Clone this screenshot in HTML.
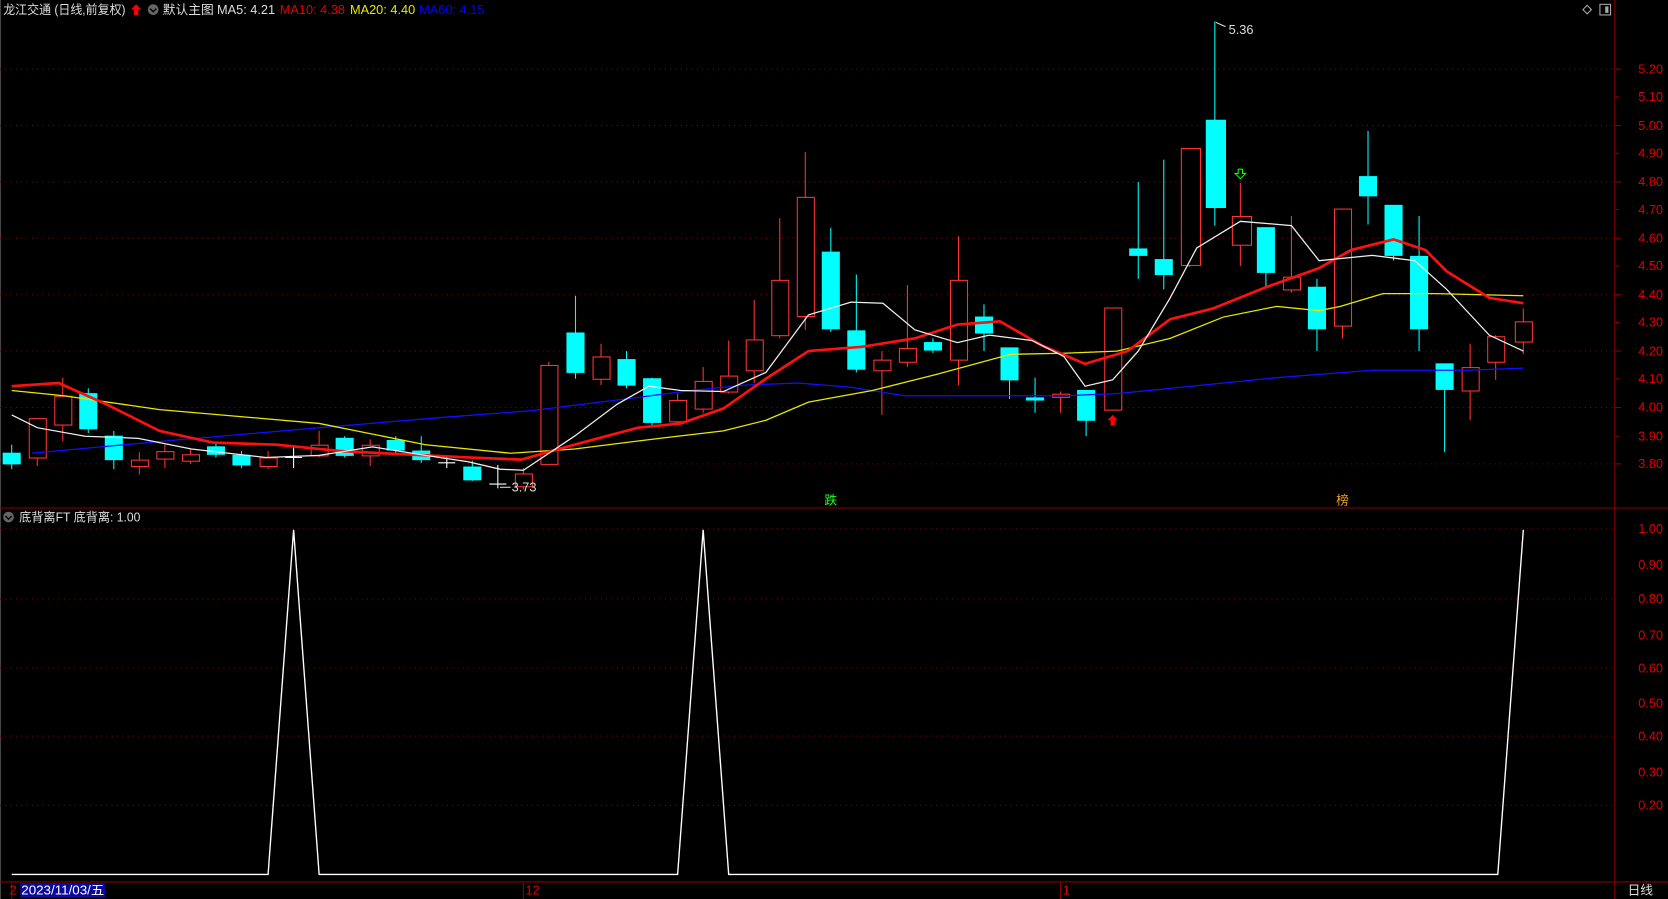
<!DOCTYPE html>
<html><head><meta charset="utf-8"><style>
html,body{margin:0;padding:0;background:#000;overflow:hidden}
svg{display:block}
text{font-family:"Liberation Sans","Noto Sans CJK SC",sans-serif}
</style></head><body>
<svg width="1668" height="899" viewBox="0 0 1568 845" xmlns="http://www.w3.org/2000/svg">
<rect width="1568" height="845" fill="#000"/>
<line x1="0.5" y1="0" x2="0.5" y2="845" stroke="#444"/>
<line x1="1518" y1="0" x2="1518" y2="845" stroke="#8b0000"/>
<line x1="0" y1="477.5" x2="1568" y2="477.5" stroke="#8b0000"/>
<line x1="0" y1="829" x2="1568" y2="829" stroke="#8b0000"/>
<g stroke="#8b0000" stroke-dasharray="1,4">
<line x1="0" y1="65" x2="1516" y2="65"/><line x1="0" y1="118" x2="1516" y2="118"/><line x1="0" y1="171" x2="1516" y2="171"/><line x1="0" y1="224" x2="1516" y2="224"/><line x1="0" y1="277" x2="1516" y2="277"/><line x1="0" y1="330" x2="1516" y2="330"/><line x1="0" y1="383" x2="1516" y2="383"/><line x1="0" y1="436" x2="1516" y2="436"/>
<line x1="0" y1="497" x2="1516" y2="497"/><line x1="0" y1="563" x2="1516" y2="563"/><line x1="0" y1="628" x2="1516" y2="628"/><line x1="0" y1="692" x2="1516" y2="692"/><line x1="0" y1="757" x2="1516" y2="757"/>
</g>
<g fill="#e00000" font-size="12">
<text x="1540" y="69">5.20</text><text x="1540" y="95">5.10</text><text x="1540" y="122">5.00</text><text x="1540" y="148">4.90</text><text x="1540" y="175">4.80</text><text x="1540" y="201">4.70</text><text x="1540" y="228">4.60</text><text x="1540" y="254">4.50</text><text x="1540" y="281">4.40</text><text x="1540" y="307">4.30</text><text x="1540" y="334">4.20</text><text x="1540" y="360">4.10</text><text x="1540" y="387">4.00</text><text x="1540" y="414">3.90</text><text x="1540" y="440">3.80</text>
<text x="1540" y="501">1.00</text><text x="1540" y="535">0.90</text><text x="1540" y="567">0.80</text><text x="1540" y="601">0.70</text><text x="1540" y="632">0.60</text><text x="1540" y="665">0.50</text><text x="1540" y="696">0.40</text><text x="1540" y="730">0.30</text><text x="1540" y="761">0.20</text>
</g>
<g stroke="#8b0000">
<line x1="1518" y1="65" x2="1524" y2="65"/><line x1="1518" y1="91" x2="1522" y2="91"/><line x1="1518" y1="118" x2="1524" y2="118"/><line x1="1518" y1="144" x2="1522" y2="144"/><line x1="1518" y1="171" x2="1524" y2="171"/><line x1="1518" y1="197" x2="1522" y2="197"/><line x1="1518" y1="224" x2="1524" y2="224"/><line x1="1518" y1="250" x2="1522" y2="250"/><line x1="1518" y1="277" x2="1524" y2="277"/><line x1="1518" y1="303" x2="1522" y2="303"/><line x1="1518" y1="330" x2="1524" y2="330"/><line x1="1518" y1="356" x2="1522" y2="356"/><line x1="1518" y1="383" x2="1524" y2="383"/><line x1="1518" y1="410" x2="1522" y2="410"/><line x1="1518" y1="436" x2="1524" y2="436"/>
<line x1="492" y1="829" x2="492" y2="845"/><line x1="997" y1="829" x2="997" y2="845"/><line x1="11" y1="829" x2="11" y2="845"/>
</g>
<text x="3" y="13" font-size="12" fill="#ddd" textLength="115" lengthAdjust="spacingAndGlyphs">龙江交通 (日线,前复权)</text>
<path d="M128 4 L133 9 L130 9 L130 14 L126 14 L126 9 L123 9 Z" fill="#f00"/>
<circle cx="144" cy="9" r="5" fill="#666"/><path d="M141 8 L144 11 L147 8" stroke="#000" fill="none" stroke-width="1.3"/>
<text x="153" y="13" font-size="12" fill="#ddd">默认主图</text>
<text x="204" y="13" font-size="12" fill="#ddd">MA5: 4.21</text>
<text x="263" y="13" font-size="12" fill="#e00000">MA10: 4.38</text>
<text x="329" y="13" font-size="12" fill="#e8e800">MA20: 4.40</text>
<text x="394" y="13" font-size="12" fill="#0000ff">MA60: 4.15</text>
<path d="M1492 5 L1496 9 L1492 13 L1488 9 Z" stroke="#aaa" fill="none"/>
<rect x="1504" y="4" width="10" height="10" stroke="#aaa" fill="none"/><rect x="1509" y="6" width="3" height="6" fill="#aaa"/>
<g stroke-width="1">
<g stroke="#00ffff" fill="#00ffff">
<line x1="11" y1="418" x2="11" y2="441"/><rect x="3" y="426" width="16" height="10"/>
<line x1="83" y1="365" x2="83" y2="407"/><rect x="75" y="370" width="16" height="33"/>
<line x1="107" y1="405" x2="107" y2="441"/><rect x="99" y="410" width="16" height="22"/>
<line x1="203" y1="416" x2="203" y2="430"/><rect x="195" y="420" width="16" height="7"/>
<line x1="227" y1="424" x2="227" y2="440"/><rect x="219" y="428" width="16" height="9"/>
<line x1="324" y1="410" x2="324" y2="430"/><rect x="316" y="412" width="16" height="16"/>
<line x1="372" y1="410" x2="372" y2="426"/><rect x="364" y="414" width="16" height="9"/>
<line x1="396" y1="410" x2="396" y2="435"/><rect x="388" y="424" width="16" height="8"/>
<line x1="444" y1="433" x2="444" y2="452"/><rect x="436" y="439" width="16" height="12"/>
<line x1="541" y1="278" x2="541" y2="356"/><rect x="533" y="313" width="16" height="37"/>
<line x1="589" y1="330" x2="589" y2="365"/><rect x="581" y="338" width="16" height="24"/>
<line x1="613" y1="355" x2="613" y2="400"/><rect x="605" y="356" width="16" height="41"/>
<line x1="781" y1="214" x2="781" y2="312"/><rect x="773" y="237" width="16" height="72"/>
<line x1="805" y1="258" x2="805" y2="350"/><rect x="797" y="311" width="16" height="36"/>
<line x1="877" y1="318" x2="877" y2="332"/><rect x="869" y="322" width="16" height="7"/>
<line x1="925" y1="286" x2="925" y2="330"/><rect x="917" y="298" width="16" height="15"/>
<line x1="949" y1="327" x2="949" y2="375"/><rect x="941" y="327" width="16" height="30"/>
<line x1="973" y1="355" x2="973" y2="388"/><rect x="965" y="374" width="16" height="2"/>
<line x1="1021" y1="367" x2="1021" y2="410"/><rect x="1013" y="367" width="16" height="28"/>
<line x1="1070" y1="171" x2="1070" y2="262"/><rect x="1062" y="234" width="16" height="6"/>
<line x1="1094" y1="150" x2="1094" y2="272"/><rect x="1086" y="244" width="16" height="14"/>
<line x1="1142" y1="20" x2="1142" y2="212"/><rect x="1134" y="113" width="18" height="82"/>
<line x1="1190" y1="214" x2="1190" y2="270"/><rect x="1182" y="214" width="16" height="42"/>
<line x1="1238" y1="262" x2="1238" y2="330"/><rect x="1230" y="270" width="16" height="39"/>
<line x1="1286" y1="123" x2="1286" y2="211"/><rect x="1278" y="166" width="16" height="18"/>
<line x1="1310" y1="193" x2="1310" y2="245"/><rect x="1302" y="193" width="16" height="47"/>
<line x1="1334" y1="203" x2="1334" y2="330"/><rect x="1326" y="241" width="16" height="68"/>
<line x1="1358" y1="342" x2="1358" y2="425"/><rect x="1350" y="342" width="16" height="24"/>
</g>
<g stroke="#ff3232" fill="#000">
<line x1="35" y1="393" x2="35" y2="438"/><rect x="27.5" y="393.5" width="16" height="37"/>
<line x1="59" y1="355" x2="59" y2="415"/><rect x="51.5" y="372.5" width="16" height="27"/>
<line x1="131" y1="425" x2="131" y2="446"/><rect x="123.5" y="432.5" width="16" height="6"/>
<line x1="155" y1="418" x2="155" y2="440"/><rect x="147.5" y="424.5" width="16" height="7"/>
<line x1="179" y1="422" x2="179" y2="436"/><rect x="171.5" y="427.5" width="16" height="6"/>
<line x1="252" y1="424" x2="252" y2="441"/><rect x="244.5" y="430.5" width="16" height="8"/>
<line x1="300" y1="405" x2="300" y2="430"/><rect x="292.5" y="418.5" width="16" height="10"/>
<line x1="348" y1="413" x2="348" y2="438"/><rect x="340.5" y="418.5" width="16" height="10"/>
<line x1="492" y1="440" x2="492" y2="460"/><rect x="484.5" y="445.5" width="16" height="12"/>
<line x1="516" y1="340" x2="516" y2="437"/><rect x="508.5" y="343.5" width="16" height="93"/>
<line x1="565" y1="323" x2="565" y2="362"/><rect x="557.5" y="335.5" width="16" height="21"/>
<line x1="637" y1="370" x2="637" y2="398"/><rect x="629.5" y="376.5" width="16" height="20"/>
<line x1="661" y1="345" x2="661" y2="388"/><rect x="653.5" y="358.5" width="16" height="26"/>
<line x1="685" y1="320" x2="685" y2="370"/><rect x="677.5" y="353.5" width="16" height="15"/>
<line x1="709" y1="282" x2="709" y2="360"/><rect x="701.5" y="319.5" width="16" height="29"/>
<line x1="733" y1="205" x2="733" y2="318"/><rect x="725.5" y="263.5" width="16" height="52"/>
<line x1="757" y1="143" x2="757" y2="310"/><rect x="749.5" y="185.5" width="16" height="112"/>
<line x1="829" y1="330" x2="829" y2="390"/><rect x="821.5" y="338.5" width="16" height="10"/>
<line x1="853" y1="268" x2="853" y2="345"/><rect x="845.5" y="327.5" width="16" height="13"/>
<line x1="901" y1="222" x2="901" y2="362"/><rect x="893.5" y="263.5" width="16" height="75"/>
<line x1="997" y1="368" x2="997" y2="388"/><rect x="989.5" y="370.5" width="16" height="3"/>
<line x1="1046" y1="289" x2="1046" y2="386"/><rect x="1038.5" y="289.5" width="16" height="96"/>
<line x1="1118" y1="139" x2="1118" y2="251"/><rect x="1110.5" y="139.5" width="18" height="110"/>
<line x1="1166" y1="172" x2="1166" y2="250"/><rect x="1158.5" y="203.5" width="18" height="27"/>
<line x1="1214" y1="203" x2="1214" y2="275"/><rect x="1206.5" y="260.5" width="16" height="12"/>
<line x1="1262" y1="196" x2="1262" y2="318"/><rect x="1254.5" y="196.5" width="16" height="110"/>
<line x1="1382" y1="323" x2="1382" y2="395"/><rect x="1374.5" y="345.5" width="16" height="22"/>
<line x1="1406" y1="315" x2="1406" y2="357"/><rect x="1398.5" y="316.5" width="16" height="24"/>
<line x1="1432" y1="290" x2="1432" y2="333"/><rect x="1424.5" y="302.5" width="16" height="19"/>
</g>
<g stroke="#fff">
<line x1="276" y1="420" x2="276" y2="440"/><line x1="268" y1="430" x2="284" y2="430"/>
<line x1="420" y1="428" x2="420" y2="440"/><line x1="412" y1="435" x2="428" y2="435"/>
<line x1="468" y1="437" x2="468" y2="459"/><line x1="460" y1="455" x2="476" y2="455"/>
</g>
</g>
<polyline fill="none" stroke="#1010ff" stroke-width="1.2" points="30,426 150,415 300,402 420,392 500,386 580,376 650,367 700,362 750,360 800,364 850,372 1000,372 1050,370 1100,365 1200,355 1290,348 1380,348 1432,346"/>
<polyline fill="none" stroke="#e8e800" stroke-width="1.2" points="11,367 60,372 150,385 300,398 400,418 480,426 540,422 620,412 680,405 720,395 760,378 820,367 880,352 950,333 1000,332 1050,330 1100,318 1150,298 1200,288 1240,292 1260,288 1300,276 1350,276 1432,278"/>
<polyline fill="none" stroke="#ff1010" stroke-width="2.5" points="11,363 55,360 100,380 150,405 200,416 260,418 320,424 400,428 440,430 490,432 540,418 600,402 640,398 680,384 720,356 760,330 810,326 860,318 900,305 940,302 980,325 1020,342 1060,330 1100,300 1140,290 1190,270 1240,252 1270,235 1310,225 1340,235 1360,255 1400,280 1432,285"/>
<polyline fill="none" stroke="#eee" stroke-width="1.2" points="11,390 35,402 80,410 130,412 180,422 250,430 300,428 350,420 400,428 440,434 470,441 492,442 540,410 580,380 610,363 640,367 680,368 720,350 760,296 800,284 830,285 860,310 900,322 930,315 970,320 1000,335 1020,363 1046,357 1070,330 1100,280 1125,233 1166,208 1214,212 1240,245 1290,240 1330,245 1360,272 1400,315 1432,330"/>
<text x="1155" y="32" font-size="12" fill="#ddd">5.36</text>
<line x1="1143" y1="21" x2="1152" y2="25" stroke="#ddd"/>
<text x="481" y="462" font-size="12" fill="#ddd">3.73</text>
<line x1="470" y1="458" x2="480" y2="458" stroke="#ddd"/>
<path d="M1164 159 L1168 159 L1168 163 L1171 163 L1166 168 L1161 163 L1164 163 Z" stroke="#0f0" fill="none"/>
<path d="M1046 390 L1051 395 L1048 395 L1048 400 L1044 400 L1044 395 L1041 395 Z" fill="#f00"/>
<text x="775" y="474" font-size="12" fill="#2f2">跌</text>
<text x="1256" y="474" font-size="12" fill="#f0a020">榜</text>
<circle cx="8" cy="486" r="5" fill="#666"/><path d="M5 485 L8 488 L11 485" stroke="#000" fill="none" stroke-width="1.3"/>
<text x="18" y="490" font-size="12" fill="#ddd" textLength="114" lengthAdjust="spacingAndGlyphs">底背离FT  底背离: 1.00</text>
<polyline fill="none" stroke="#fff" stroke-width="1.3" points="11,822 252,822 276,498 300,822 637,822 661,498 685,822 1408,822 1432,498"/>
<text x="9" y="841" font-size="12" fill="#e00000">2</text>
<rect x="19" y="830" width="80" height="14" fill="#0a0a9a"/>
<text x="20" y="841" font-size="12" fill="#fff" textLength="78" lengthAdjust="spacingAndGlyphs">2023/11/03/五</text>
<text x="494" y="841" font-size="12" fill="#e00000">12</text>
<text x="999" y="841" font-size="12" fill="#e00000">1</text>
<text x="1530" y="841" font-size="12" fill="#ddd">日线</text>
</svg>
</body></html>
